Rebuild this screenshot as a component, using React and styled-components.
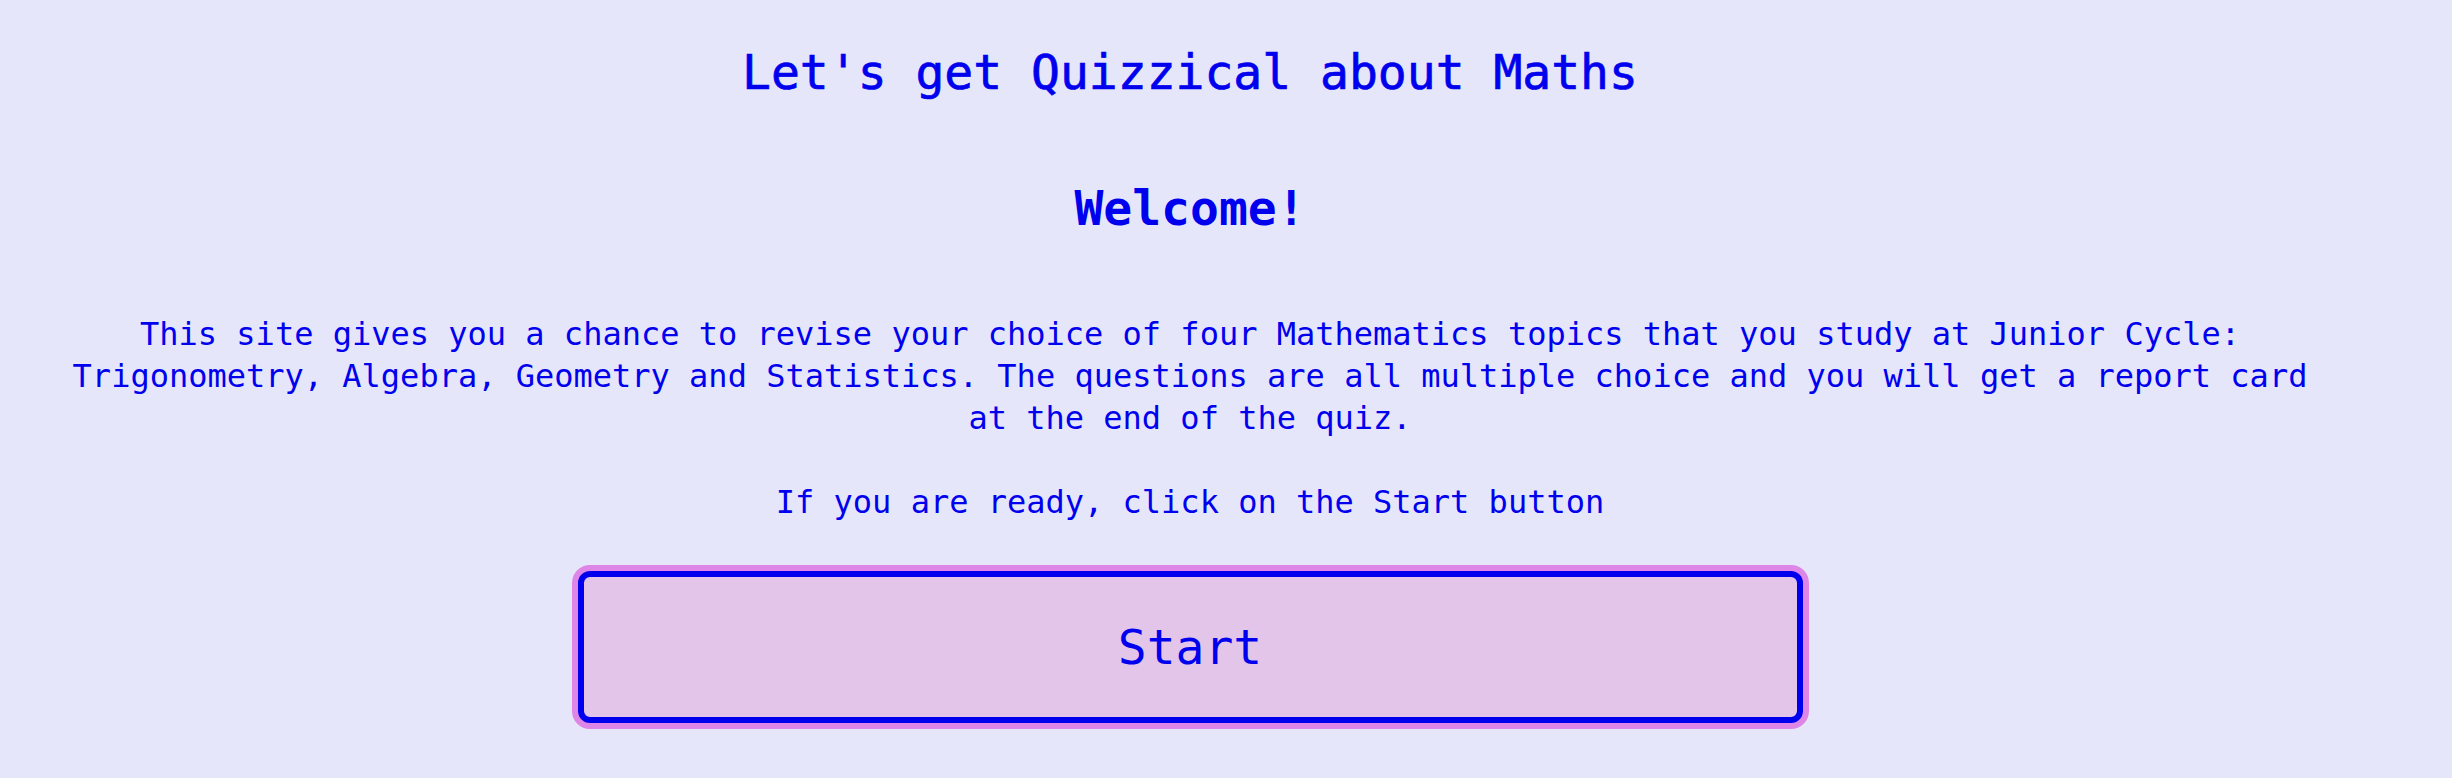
import React from "react";
import styled, { createGlobalStyle } from "styled-components";

const GlobalStyle = createGlobalStyle`
  html, body {
    margin: 0;
    padding: 0;
    background: #e6e6fa;
  }
  body {
    font-family: "DejaVu Sans Mono", "Liberation Mono", monospace;
    color: #0000ee;
  }
`;

const Page = styled.main`
  min-height: 778px;
  box-sizing: border-box;
  padding: 41px 136px 40px 64px;
  display: flex;
  flex-direction: column;
  align-items: center;
  text-align: center;
`;

const Title = styled.h1`
  margin: 0;
  font-size: 48px;
  font-weight: 500;
  line-height: 1.3;
  -webkit-text-stroke: 0.7px #0000ee;
`;

const Welcome = styled.h2`
  margin: 74px 0 0;
  font-size: 48px;
  font-weight: 700;
  line-height: 1.3;
`;

const Text = styled.p`
  margin: ${(props) => props.$top || 0}px 0 0;
  font-size: 32px;
  line-height: 42px;
`;

const StartButton = styled.button`
  margin-top: 48px;
  width: 1225px;
  height: 152px;
  box-sizing: border-box;
  border: 6px solid #0000ee;
  border-radius: 12px;
  box-shadow: 0 0 0 6px #de85e8;
  background: #e4c5ea;
  color: #0000ee;
  font-family: inherit;
  font-size: 48px;
  cursor: pointer;
`;

export default function App() {
  return (
    <>
      <GlobalStyle />
      <Page>
        <Title>Let's get Quizzical about Maths</Title>
        <Welcome>Welcome!</Welcome>
        <Text $top={73}>
          This site gives you a chance to revise your choice of four Mathematics
          topics that you study at Junior Cycle: Trigonometry, Algebra, Geometry
          and Statistics. The questions are all multiple choice and you will get
          a report card at the end of the quiz.
        </Text>
        <Text $top={42}>If you are ready, click on the Start button</Text>
        <StartButton>Start</StartButton>
      </Page>
    </>
  );
}
